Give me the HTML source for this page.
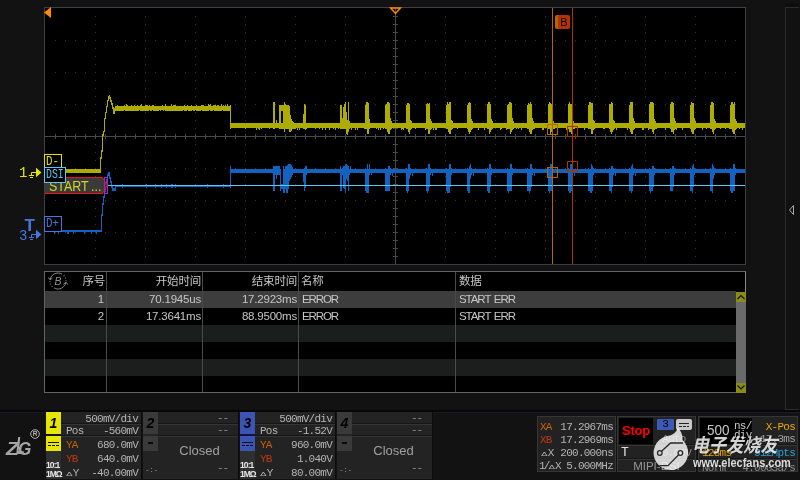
<!DOCTYPE html>
<html lang="zh">
<head>
<meta charset="utf-8">
<title>Oscilloscope MIPI-DSI decode</title>
<style>
*{box-sizing:border-box;margin:0;padding:0}
html,body{width:800px;height:480px;overflow:hidden;background:#121212}
body{position:relative;font-family:"Liberation Sans","Noto Sans CJK SC",sans-serif;color:#c8c8c8}
.abs{position:absolute}
#scopebox{position:absolute;left:44px;top:7px;width:702px;height:258px;border:1px solid #3e3e44;background:#000}
svg.scope{position:absolute;left:0;top:0}
.mono{font-family:"Liberation Mono",monospace}
.lbl{position:absolute;font-family:"Liberation Mono",monospace;font-size:12px;line-height:13px;background:#000;padding-left:1px;white-space:nowrap}
.lbl span{display:inline-block;transform:scaleX(0.9);transform-origin:0 50%}
/* right panel */
#rpanel{position:absolute;left:785px;top:7px;width:14px;height:403px;border:1px solid #2c2c2c;border-right:none;background:#111}
/* table */
#tbl{position:absolute;left:44px;top:271px;width:702px;height:122px;border:1px solid #646464;border-right-color:#868686;background:#000;font-size:11.5px;letter-spacing:-0.2px}
#tbl .row{position:absolute;left:0;width:691px;height:17px}
#tbl .cell{position:absolute;top:0;height:17px;line-height:17px;white-space:nowrap;color:#c6c6c6}
#tbl .vl{position:absolute;top:0;width:1px;height:120px;background:#4a4a4a}
.r{text-align:right}
/* bottom bar */
#bar{position:absolute;left:0;top:410px;width:800px;height:70px}
.chp{position:absolute;top:412px;width:95px;height:67px;background:#232323;box-shadow:1px 0 0 #0c0c0c}
.chp .num{position:absolute;left:0;top:0;width:15px;height:22px;font:italic bold 14px/22px "Liberation Sans",sans-serif;color:#000;text-align:center}
.chp .cpl{position:absolute;left:0;top:24px;width:15px;height:15px}
.chp .t{position:absolute;font-family:"Liberation Mono",monospace;font-size:11px;line-height:12px;white-space:nowrap;color:#b4b4b4;letter-spacing:-0.75px}
.chp .sm{font:bold 8.5px/9px "Liberation Sans",sans-serif;color:#e6e6e6}
.chp .rt{right:3px;text-align:right}
.hl{position:absolute;height:2px;border-top:1px solid #161616;border-bottom:1px solid #353535}
.dl{display:inline-block;font-family:"Liberation Sans",sans-serif;font-size:10px;transform:scaleY(0.52);transform-origin:50% 74%;letter-spacing:0}
.tb{font-size:11px;line-height:12px;letter-spacing:-0.75px;white-space:nowrap}
</style>
</head>
<body>
<div id="root" style="position:absolute;left:0;top:0;width:800px;height:480px;will-change:transform">
<div id="scopebox"></div>
<div id="rpanel"></div><div class="abs" style="left:785px;top:3px;width:14px;height:4px;background:#0e0e0e"></div>
<svg class="scope" width="800" height="480" viewBox="0 0 800 480" shape-rendering="crispEdges">
<g stroke="#363636" stroke-width="1" fill="none"><path d="M55 40.5H745" stroke-dasharray="1 9"/><path d="M55 72.5H745" stroke-dasharray="1 9"/><path d="M55 104.5H745" stroke-dasharray="1 9"/><path d="M55 168.5H745" stroke-dasharray="1 9"/><path d="M55 200.5H745" stroke-dasharray="1 9"/><path d="M55 232.5H745" stroke-dasharray="1 9"/><path d="M95.5 16V264" stroke-dasharray="1 7"/><path d="M145.5 16V264" stroke-dasharray="1 7"/><path d="M195.5 16V264" stroke-dasharray="1 7"/><path d="M245.5 16V264" stroke-dasharray="1 7"/><path d="M295.5 16V264" stroke-dasharray="1 7"/><path d="M345.5 16V264" stroke-dasharray="1 7"/><path d="M445.5 16V264" stroke-dasharray="1 7"/><path d="M495.5 16V264" stroke-dasharray="1 7"/><path d="M545.5 16V264" stroke-dasharray="1 7"/><path d="M595.5 16V264" stroke-dasharray="1 7"/><path d="M645.5 16V264" stroke-dasharray="1 7"/><path d="M695.5 16V264" stroke-dasharray="1 7"/></g>
<g stroke="#4a4a4a" stroke-width="1" fill="none"><path d="M45 136.5H745M395.5 8V264"/><path d="M55.5 134v5M65.5 134v5M75.5 134v5M85.5 134v5M95.5 134v5M105.5 134v5M115.5 134v5M125.5 134v5M135.5 134v5M145.5 134v5M155.5 134v5M165.5 134v5M175.5 134v5M185.5 134v5M195.5 134v5M205.5 134v5M215.5 134v5M225.5 134v5M235.5 134v5M245.5 134v5M255.5 134v5M265.5 134v5M275.5 134v5M285.5 134v5M295.5 134v5M305.5 134v5M315.5 134v5M325.5 134v5M335.5 134v5M345.5 134v5M355.5 134v5M365.5 134v5M375.5 134v5M385.5 134v5M395.5 134v5M405.5 134v5M415.5 134v5M425.5 134v5M435.5 134v5M445.5 134v5M455.5 134v5M465.5 134v5M475.5 134v5M485.5 134v5M495.5 134v5M505.5 134v5M515.5 134v5M525.5 134v5M535.5 134v5M545.5 134v5M555.5 134v5M565.5 134v5M575.5 134v5M585.5 134v5M595.5 134v5M605.5 134v5M615.5 134v5M625.5 134v5M635.5 134v5M645.5 134v5M655.5 134v5M665.5 134v5M675.5 134v5M685.5 134v5M695.5 134v5M705.5 134v5M715.5 134v5M725.5 134v5M735.5 134v5M393 16.5h5M393 24.5h5M393 32.5h5M393 40.5h5M393 48.5h5M393 56.5h5M393 64.5h5M393 72.5h5M393 80.5h5M393 88.5h5M393 96.5h5M393 104.5h5M393 112.5h5M393 120.5h5M393 128.5h5M393 136.5h5M393 144.5h5M393 152.5h5M393 160.5h5M393 168.5h5M393 176.5h5M393 184.5h5M393 192.5h5M393 200.5h5M393 208.5h5M393 216.5h5M393 224.5h5M393 232.5h5M393 240.5h5M393 248.5h5M393 256.5h5"/></g>
<path d="M45.5 169v4M46.5 169v4M47.5 169v4M48.5 169v4M49.5 169v4M50.5 169v4M51.5 169v4M52.5 169v4M53.5 169v4M54.5 169v4M55.5 169v4M56.5 169v4M57.5 169v4M58.5 169v4M59.5 169v4M60.5 169v4M61.5 169v4M62.5 169v4M63.5 169v4M64.5 169v4M65.5 169v4M66.5 169v4M67.5 169v4M68.5 169v4M69.5 169v4M70.5 169v4M71.5 169v4M72.5 169v4M73.5 169v4M74.5 169v4M75.5 169v4M76.5 169v4M77.5 169v4M78.5 169v4M79.5 169v4M80.5 169v4M81.5 169v4M82.5 169v4M83.5 169v4M84.5 169v4M85.5 169v4M86.5 169v4M87.5 169v4M88.5 169v4M89.5 169v4M90.5 169v4M91.5 169v4M92.5 169v4M93.5 169v4M94.5 169v4M95.5 169v4M96.5 169v4M97.5 169v4M98.5 169v4M99.5 169v4M100.5 157v16M101.5 150v9M102.5 134v18M103.5 131v5M104.5 118v14M105.5 112v7M106.5 106v7M107.5 100v7M108.5 96v5M109.5 95v4M110.5 97v5M111.5 100v5M112.5 103v6M113.5 107v7M114.5 108v6M115.5 106v5M116.5 106v5M117.5 105v6M118.5 106v5M119.5 106v5M120.5 106v5M121.5 106v5M122.5 106v5M123.5 106v5M124.5 105v5M125.5 106v5M126.5 104v7M127.5 105v6M128.5 106v5M129.5 106v5M130.5 106v5M131.5 105v6M132.5 106v5M133.5 106v5M134.5 105v6M135.5 106v5M136.5 106v5M137.5 105v6M138.5 106v5M139.5 106v4M140.5 105v6M141.5 104v7M142.5 106v5M143.5 106v5M144.5 106v5M145.5 105v6M146.5 105v6M147.5 105v6M148.5 106v5M149.5 105v5M150.5 106v5M151.5 106v5M152.5 105v5M153.5 105v6M154.5 106v5M155.5 106v5M156.5 106v5M157.5 106v5M158.5 106v5M159.5 106v4M160.5 106v5M161.5 106v4M162.5 105v5M163.5 106v5M164.5 106v4M165.5 104v7M166.5 106v5M167.5 106v5M168.5 106v5M169.5 106v5M170.5 106v5M171.5 104v7M172.5 106v5M173.5 105v6M174.5 105v6M175.5 105v6M176.5 106v5M177.5 106v5M178.5 106v5M179.5 106v5M180.5 106v5M181.5 106v5M182.5 106v5M183.5 106v4M184.5 105v6M185.5 106v5M186.5 106v5M187.5 105v5M188.5 106v5M189.5 106v5M190.5 106v5M191.5 105v6M192.5 106v4M193.5 106v5M194.5 106v5M195.5 106v4M196.5 105v6M197.5 106v5M198.5 106v5M199.5 106v5M200.5 106v5M201.5 105v5M202.5 105v6M203.5 105v6M204.5 106v5M205.5 106v5M206.5 106v5M207.5 106v5M208.5 104v7M209.5 105v5M210.5 104v7M211.5 106v5M212.5 106v5M213.5 105v5M214.5 105v6M215.5 105v6M216.5 106v5M217.5 105v6M218.5 105v6M219.5 106v5M220.5 106v5M221.5 104v7M222.5 106v4M223.5 105v6M224.5 106v5M225.5 105v6M226.5 106v5M227.5 104v7M228.5 106v5M229.5 106v5M230.5 105v24M231.5 123v5M232.5 123v5M233.5 123v5M234.5 123v5M235.5 123v5M236.5 123v5M237.5 123v5M238.5 123v5M239.5 123v5M240.5 123v5M241.5 123v5M242.5 123v5M243.5 123v5M244.5 123v5M245.5 123v6M246.5 123v5M247.5 123v5M248.5 123v5M249.5 123v5M250.5 123v5M251.5 123v5M252.5 123v5M253.5 123v5M254.5 123v5M255.5 123v5M256.5 123v7M257.5 123v5M258.5 123v6M259.5 123v7M260.5 123v5M261.5 123v6M262.5 123v5M263.5 123v5M264.5 123v5M265.5 123v5M266.5 123v5M267.5 123v5M268.5 123v5M269.5 123v6M270.5 123v5M271.5 123v5M272.5 123v5M273.5 102v27M274.5 102v27M275.5 123v5M276.5 120v8M277.5 123v5M278.5 123v5M279.5 105v24M280.5 105v24M281.5 105v6M281.5 123v6M282.5 105v6M282.5 123v6M283.5 105v24M284.5 102v30M285.5 104v25M286.5 105v24M287.5 105v24M288.5 105v24M289.5 106v26M290.5 115v17M291.5 119v12M292.5 121v8M293.5 122v7M294.5 123v6M295.5 123v6M296.5 123v5M297.5 123v7M298.5 123v5M299.5 123v7M300.5 123v5M301.5 123v5M302.5 123v5M303.5 114v15M304.5 104v25M305.5 105v25M306.5 123v6M307.5 123v5M308.5 123v5M309.5 123v5M310.5 123v5M311.5 123v5M312.5 123v5M313.5 123v5M314.5 123v5M315.5 123v6M316.5 123v5M317.5 123v5M318.5 123v5M319.5 123v6M320.5 123v5M321.5 123v5M322.5 123v7M323.5 123v5M324.5 123v5M325.5 123v7M326.5 123v5M327.5 123v5M328.5 123v5M329.5 123v7M330.5 123v5M331.5 123v5M332.5 123v5M333.5 123v6M334.5 123v5M335.5 123v7M336.5 123v5M337.5 123v5M338.5 123v6M339.5 123v5M340.5 105v24M341.5 105v24M342.5 118v11M343.5 107v22M344.5 104v25M345.5 102v27M346.5 112v22M347.5 120v15M348.5 102v30M349.5 121v8M350.5 123v5M351.5 123v7M352.5 123v5M353.5 123v5M354.5 123v5M355.5 123v7M356.5 123v5M357.5 123v7M358.5 123v5M359.5 123v5M360.5 123v5M361.5 123v5M362.5 123v5M363.5 123v5M364.5 123v6M365.5 105v24M366.5 102v27M367.5 102v32M368.5 103v31M369.5 119v10M370.5 123v5M371.5 123v5M372.5 123v5M373.5 123v5M374.5 123v5M375.5 123v5M376.5 123v6M377.5 123v5M378.5 123v7M379.5 123v5M380.5 123v7M381.5 123v5M382.5 123v5M383.5 123v6M384.5 123v5M385.5 105v24M386.5 104v25M387.5 102v30M388.5 102v32M389.5 103v31M390.5 118v12M391.5 121v8M392.5 123v5M393.5 123v5M394.5 123v5M395.5 123v5M396.5 123v5M397.5 123v5M398.5 123v5M399.5 123v5M400.5 123v5M401.5 123v7M402.5 123v6M403.5 123v7M404.5 123v5M405.5 123v5M406.5 105v24M407.5 103v26M408.5 103v29M409.5 104v30M410.5 120v10M411.5 121v8M412.5 123v5M413.5 123v5M414.5 123v5M415.5 123v6M416.5 123v5M417.5 123v5M418.5 123v5M419.5 123v5M420.5 123v5M421.5 123v5M422.5 123v5M423.5 123v5M424.5 123v5M425.5 123v7M426.5 104v25M427.5 103v26M428.5 104v30M429.5 103v31M430.5 119v11M431.5 121v8M432.5 123v5M433.5 123v7M434.5 123v5M435.5 123v7M436.5 123v7M437.5 123v5M438.5 123v5M439.5 123v5M440.5 123v5M441.5 123v5M442.5 123v5M443.5 123v5M444.5 123v5M445.5 123v5M446.5 105v24M447.5 102v27M448.5 104v28M449.5 102v32M450.5 102v32M451.5 120v10M452.5 121v8M453.5 123v5M454.5 123v5M455.5 123v5M456.5 123v5M457.5 123v6M458.5 123v5M459.5 123v5M460.5 123v5M461.5 123v5M462.5 123v5M463.5 123v5M464.5 123v5M465.5 123v5M466.5 123v5M467.5 105v24M468.5 103v29M469.5 102v32M470.5 103v29M471.5 119v11M472.5 121v8M473.5 123v5M474.5 123v5M475.5 123v5M476.5 123v5M477.5 123v5M478.5 123v7M479.5 123v5M480.5 123v5M481.5 123v5M482.5 123v5M483.5 123v5M484.5 123v7M485.5 123v5M486.5 123v5M487.5 104v25M488.5 102v27M489.5 102v32M490.5 104v28M491.5 119v11M492.5 121v8M493.5 123v5M494.5 123v5M495.5 123v5M496.5 123v5M497.5 123v5M498.5 123v5M499.5 123v5M500.5 123v7M501.5 123v6M502.5 123v5M503.5 123v5M504.5 123v5M505.5 123v5M506.5 123v7M507.5 105v24M508.5 104v25M509.5 102v27M510.5 102v32M511.5 103v29M512.5 118v12M513.5 121v8M514.5 123v5M515.5 123v5M516.5 123v6M517.5 123v5M518.5 123v6M519.5 123v5M520.5 123v5M521.5 123v7M522.5 123v5M523.5 123v5M524.5 123v5M525.5 123v5M526.5 123v5M527.5 105v24M528.5 103v26M529.5 104v28M530.5 102v32M531.5 104v30M532.5 118v12M533.5 121v8M534.5 123v6M535.5 123v5M536.5 123v5M537.5 123v5M538.5 123v5M539.5 123v5M540.5 123v5M541.5 123v5M542.5 123v7M543.5 123v7M544.5 123v5M545.5 123v5M546.5 123v5M547.5 123v6M548.5 104v25M549.5 102v27M550.5 103v31M551.5 104v28M552.5 118v12M553.5 121v8M554.5 123v6M555.5 123v5M556.5 123v5M557.5 123v5M558.5 123v5M559.5 123v5M560.5 123v5M561.5 123v5M562.5 123v5M563.5 123v5M564.5 123v5M565.5 123v5M566.5 123v7M567.5 123v6M568.5 104v25M569.5 102v30M570.5 104v28M571.5 104v30M572.5 118v12M573.5 121v8M574.5 123v6M575.5 123v5M576.5 123v5M577.5 123v5M578.5 123v5M579.5 123v5M580.5 123v5M581.5 123v5M582.5 123v5M583.5 123v5M584.5 123v7M585.5 123v5M586.5 123v5M587.5 123v5M588.5 105v24M589.5 102v27M590.5 102v27M591.5 103v31M592.5 103v31M593.5 120v10M594.5 121v8M595.5 123v5M596.5 123v5M597.5 123v5M598.5 123v5M599.5 123v5M600.5 123v5M601.5 123v5M602.5 123v5M603.5 123v6M604.5 123v6M605.5 123v5M606.5 123v5M607.5 123v5M608.5 123v5M609.5 104v25M610.5 104v28M611.5 102v32M612.5 103v29M613.5 120v10M614.5 121v8M615.5 123v5M616.5 123v7M617.5 123v5M618.5 123v5M619.5 123v5M620.5 123v5M621.5 123v5M622.5 123v5M623.5 123v5M624.5 123v5M625.5 123v5M626.5 123v5M627.5 123v7M628.5 123v5M629.5 105v24M630.5 102v30M631.5 102v32M632.5 102v32M633.5 118v12M634.5 121v8M635.5 123v5M636.5 123v5M637.5 123v5M638.5 123v5M639.5 123v5M640.5 123v5M641.5 123v5M642.5 123v7M643.5 123v7M644.5 123v5M645.5 123v5M646.5 123v5M647.5 123v5M648.5 123v7M649.5 104v25M650.5 102v27M651.5 102v27M652.5 102v30M653.5 103v31M654.5 119v11M655.5 121v8M656.5 123v6M657.5 123v5M658.5 123v5M659.5 123v5M660.5 123v5M661.5 123v5M662.5 123v5M663.5 123v5M664.5 123v5M665.5 123v7M666.5 123v5M667.5 123v5M668.5 123v5M669.5 123v5M670.5 104v25M671.5 102v30M672.5 102v30M673.5 103v31M674.5 118v12M675.5 121v8M676.5 123v7M677.5 123v5M678.5 123v5M679.5 123v5M680.5 123v5M681.5 123v5M682.5 123v7M683.5 123v5M684.5 123v5M685.5 123v5M686.5 123v5M687.5 123v5M688.5 123v5M689.5 123v5M690.5 105v24M691.5 102v30M692.5 103v31M693.5 103v31M694.5 118v12M695.5 121v8M696.5 123v5M697.5 123v5M698.5 123v5M699.5 123v5M700.5 123v5M701.5 123v5M702.5 123v7M703.5 123v5M704.5 123v5M705.5 123v5M706.5 123v6M707.5 123v5M708.5 123v5M709.5 123v5M710.5 105v24M711.5 102v27M712.5 102v30M713.5 103v31M714.5 119v11M715.5 121v8M716.5 123v5M717.5 123v5M718.5 123v5M719.5 123v5M720.5 123v6M721.5 123v5M722.5 123v5M723.5 123v5M724.5 123v5M725.5 123v6M726.5 123v5M727.5 123v5M728.5 123v5M729.5 123v6M730.5 105v24M731.5 102v27M732.5 102v30M733.5 104v30M734.5 102v32M735.5 119v11M736.5 121v8M737.5 123v5M738.5 123v5M739.5 123v6M740.5 123v5M741.5 123v5M742.5 123v7M743.5 123v5M744.5 123v5" stroke="#aeac00" stroke-width="1" fill="none"/>
<path d="M45.5 230v2M46.5 230v2M47.5 230v2M48.5 230v2M49.5 230v2M50.5 230v2M51.5 230v2M52.5 230v2M53.5 230v2M54.5 230v4M55.5 230v2M56.5 230v2M57.5 230v2M58.5 230v4M59.5 230v2M60.5 230v2M61.5 230v2M62.5 230v2M63.5 230v2M64.5 230v2M65.5 230v2M66.5 230v2M67.5 230v4M68.5 230v4M69.5 230v2M70.5 230v2M71.5 230v2M72.5 230v2M73.5 230v4M74.5 230v2M75.5 230v2M76.5 230v2M77.5 230v2M78.5 230v2M79.5 230v2M80.5 230v2M81.5 230v2M82.5 230v2M83.5 230v2M84.5 230v4M85.5 230v2M86.5 230v2M87.5 230v2M88.5 230v2M89.5 230v2M90.5 230v2M91.5 230v4M92.5 230v2M93.5 230v2M94.5 230v2M95.5 230v2M96.5 230v4M97.5 230v2M98.5 230v2M99.5 230v2M100.5 230v2M101.5 214v18M102.5 203v13M103.5 196v9M104.5 190v8M105.5 184v8M106.5 179v7M107.5 174v7M108.5 172v4M109.5 172v7M110.5 177v6M111.5 181v7M112.5 186v5M113.5 188v3M114.5 188v3M115.5 186v5M116.5 186v1M117.5 186v1M118.5 186v1M119.5 186v1M120.5 186v1M121.5 186v1M122.5 184v4M123.5 186v1M124.5 186v1M125.5 186v1M126.5 186v1M127.5 186v1M128.5 186v1M129.5 186v1M130.5 186v1M131.5 186v1M132.5 186v1M133.5 186v1M134.5 186v1M135.5 186v1M136.5 186v1M137.5 186v1M138.5 186v1M139.5 186v1M140.5 186v1M141.5 186v1M142.5 186v1M143.5 186v1M144.5 186v1M145.5 186v1M146.5 184v4M147.5 186v1M148.5 186v1M149.5 186v1M150.5 186v1M151.5 186v1M152.5 186v1M153.5 186v1M154.5 186v1M155.5 184v4M156.5 186v1M157.5 186v1M158.5 186v1M159.5 186v1M160.5 186v1M161.5 184v4M162.5 186v1M163.5 186v1M164.5 186v1M165.5 186v1M166.5 184v4M167.5 186v1M168.5 186v1M169.5 186v1M170.5 186v1M171.5 184v4M172.5 184v4M173.5 186v1M174.5 186v1M175.5 184v4M176.5 186v1M177.5 186v1M178.5 186v1M179.5 186v1M180.5 186v1M181.5 186v1M182.5 186v1M183.5 186v1M184.5 186v1M185.5 186v1M186.5 186v1M187.5 186v1M188.5 186v1M189.5 186v1M190.5 186v1M191.5 186v1M192.5 186v1M193.5 186v1M194.5 186v1M195.5 186v1M196.5 186v1M197.5 186v1M198.5 186v1M199.5 186v1M200.5 186v1M201.5 186v1M202.5 186v1M203.5 186v1M204.5 186v1M205.5 186v1M206.5 186v1M207.5 184v4M208.5 186v1M209.5 186v1M210.5 186v1M211.5 186v1M212.5 186v1M213.5 186v1M214.5 186v1M215.5 186v1M216.5 186v1M217.5 186v1M218.5 186v1M219.5 186v1M220.5 186v1M221.5 186v1M222.5 186v1M223.5 184v4M224.5 186v1M225.5 186v1M226.5 186v1M227.5 186v1M228.5 186v1M229.5 186v1M230.5 166v22M231.5 169v4M232.5 169v4M233.5 169v4M234.5 169v4M235.5 169v4M236.5 169v4M237.5 169v4M238.5 169v4M239.5 169v4M240.5 169v4M241.5 169v4M242.5 169v4M243.5 169v4M244.5 169v4M245.5 169v4M246.5 169v4M247.5 169v4M248.5 169v4M249.5 169v4M250.5 169v4M251.5 169v4M252.5 169v4M253.5 169v4M254.5 169v4M255.5 169v4M256.5 169v4M257.5 169v4M258.5 169v4M259.5 169v4M260.5 169v4M261.5 169v4M262.5 169v4M263.5 169v4M264.5 169v4M265.5 169v4M266.5 169v4M267.5 169v4M268.5 169v4M269.5 169v4M270.5 169v4M271.5 169v4M272.5 169v4M273.5 166v25M274.5 166v25M275.5 166v9M276.5 166v13M277.5 166v9M278.5 166v9M279.5 166v9M280.5 169v22M281.5 184v5M282.5 184v5M283.5 166v27M284.5 169v24M285.5 166v23M286.5 166v27M287.5 165v28M288.5 164v25M289.5 164v17M290.5 164v15M291.5 165v12M292.5 167v8M293.5 169v4M294.5 169v4M295.5 169v4M296.5 169v4M297.5 169v4M298.5 169v4M299.5 169v4M300.5 169v4M301.5 169v4M302.5 169v4M303.5 169v13M304.5 168v23M305.5 166v22M306.5 166v9M307.5 169v4M308.5 169v4M309.5 169v4M310.5 169v4M311.5 169v4M312.5 169v4M313.5 169v4M314.5 169v4M315.5 169v4M316.5 169v4M317.5 169v4M318.5 169v4M319.5 169v4M320.5 169v4M321.5 169v4M322.5 169v4M323.5 169v4M324.5 169v4M325.5 169v4M326.5 169v4M327.5 169v4M328.5 169v4M329.5 169v4M330.5 169v4M331.5 169v4M332.5 169v4M333.5 169v4M334.5 169v4M335.5 169v4M336.5 169v4M337.5 169v4M338.5 169v4M339.5 169v4M340.5 166v25M341.5 169v22M342.5 168v7M343.5 166v22M344.5 166v23M345.5 164v29M346.5 164v15M347.5 165v16M348.5 166v25M349.5 169v6M350.5 166v7M351.5 169v4M352.5 169v4M353.5 169v4M354.5 169v4M355.5 169v4M356.5 169v4M357.5 169v4M358.5 169v4M359.5 169v4M360.5 169v4M361.5 169v4M362.5 169v4M363.5 169v4M364.5 169v4M365.5 169v22M366.5 169v24M367.5 164v29M368.5 169v24M369.5 164v11M370.5 169v4M371.5 169v6M372.5 169v4M373.5 169v4M374.5 169v4M375.5 169v4M376.5 169v4M377.5 169v4M378.5 169v4M379.5 169v4M380.5 169v4M381.5 169v4M382.5 169v4M383.5 169v4M384.5 169v4M385.5 168v23M386.5 169v22M387.5 169v22M388.5 166v25M389.5 166v25M390.5 168v7M391.5 169v4M392.5 169v7M393.5 169v4M394.5 169v4M395.5 169v4M396.5 169v4M397.5 169v4M398.5 169v4M399.5 169v4M400.5 169v4M401.5 169v4M402.5 169v4M403.5 169v4M404.5 169v4M405.5 169v4M406.5 168v23M407.5 169v24M408.5 164v27M409.5 164v15M410.5 168v7M411.5 169v4M412.5 169v7M413.5 169v4M414.5 169v4M415.5 169v4M416.5 169v4M417.5 169v4M418.5 169v4M419.5 169v4M420.5 169v4M421.5 169v4M422.5 169v4M423.5 169v4M424.5 169v4M425.5 169v4M426.5 168v23M427.5 169v24M428.5 164v27M429.5 164v23M430.5 168v7M431.5 169v4M432.5 169v7M433.5 169v4M434.5 169v4M435.5 169v4M436.5 169v4M437.5 169v4M438.5 169v4M439.5 169v4M440.5 169v4M441.5 169v4M442.5 169v4M443.5 169v4M444.5 169v4M445.5 169v4M446.5 168v23M447.5 169v24M448.5 169v24M449.5 164v29M450.5 164v23M451.5 168v7M452.5 169v4M453.5 169v4M454.5 169v4M455.5 169v4M456.5 169v4M457.5 169v4M458.5 169v4M459.5 169v4M460.5 169v4M461.5 169v4M462.5 169v4M463.5 169v4M464.5 169v4M465.5 169v4M466.5 169v4M467.5 168v23M468.5 169v24M469.5 166v27M470.5 164v15M471.5 168v7M472.5 169v4M473.5 169v7M474.5 169v4M475.5 169v4M476.5 169v4M477.5 169v4M478.5 169v4M479.5 169v4M480.5 169v4M481.5 169v4M482.5 169v4M483.5 169v4M484.5 169v4M485.5 169v4M486.5 169v4M487.5 168v23M488.5 169v24M489.5 164v29M490.5 164v23M491.5 168v7M492.5 169v4M493.5 169v4M494.5 169v4M495.5 169v4M496.5 169v4M497.5 169v4M498.5 169v4M499.5 169v4M500.5 169v4M501.5 169v4M502.5 169v4M503.5 169v4M504.5 169v4M505.5 169v4M506.5 169v4M507.5 168v23M508.5 169v24M509.5 169v22M510.5 164v27M511.5 164v27M512.5 168v7M513.5 169v4M514.5 169v4M515.5 169v4M516.5 169v4M517.5 169v4M518.5 169v4M519.5 169v4M520.5 169v4M521.5 169v4M522.5 169v4M523.5 169v4M524.5 169v4M525.5 169v4M526.5 169v4M527.5 168v23M528.5 169v22M529.5 169v24M530.5 164v27M531.5 164v23M532.5 168v7M533.5 169v4M534.5 169v7M535.5 169v4M536.5 169v4M537.5 169v4M538.5 169v4M539.5 169v4M540.5 169v4M541.5 169v4M542.5 169v4M543.5 169v4M544.5 169v4M545.5 169v4M546.5 169v4M547.5 169v4M548.5 168v23M549.5 169v24M550.5 164v27M551.5 164v27M552.5 168v7M553.5 169v4M554.5 169v4M555.5 169v4M556.5 169v4M557.5 169v4M558.5 169v4M559.5 169v4M560.5 169v4M561.5 169v4M562.5 169v4M563.5 169v4M564.5 169v4M565.5 169v4M566.5 169v4M567.5 169v4M568.5 168v23M569.5 169v24M570.5 164v29M571.5 164v27M572.5 168v7M573.5 169v4M574.5 169v7M575.5 169v4M576.5 169v4M577.5 169v4M578.5 169v4M579.5 169v4M580.5 169v4M581.5 169v4M582.5 169v4M583.5 169v4M584.5 169v4M585.5 169v4M586.5 169v4M587.5 169v4M588.5 168v23M589.5 169v22M590.5 169v24M591.5 164v29M592.5 166v25M593.5 168v7M594.5 169v4M595.5 169v4M596.5 169v4M597.5 169v4M598.5 169v4M599.5 169v4M600.5 169v4M601.5 169v4M602.5 169v4M603.5 169v4M604.5 169v4M605.5 169v4M606.5 169v4M607.5 169v4M608.5 169v4M609.5 168v23M610.5 169v22M611.5 166v27M612.5 166v21M613.5 168v7M614.5 169v4M615.5 169v7M616.5 169v4M617.5 169v4M618.5 169v4M619.5 169v4M620.5 169v4M621.5 169v4M622.5 169v4M623.5 169v4M624.5 169v4M625.5 169v4M626.5 169v4M627.5 169v4M628.5 169v4M629.5 168v23M630.5 169v22M631.5 166v27M632.5 164v27M633.5 168v7M634.5 169v4M635.5 169v7M636.5 169v4M637.5 169v4M638.5 169v4M639.5 169v4M640.5 169v4M641.5 169v4M642.5 169v4M643.5 169v4M644.5 169v4M645.5 169v4M646.5 169v4M647.5 169v4M648.5 169v4M649.5 168v23M650.5 169v24M651.5 169v22M652.5 166v25M653.5 166v21M654.5 168v7M655.5 169v4M656.5 169v4M657.5 169v4M658.5 169v4M659.5 169v4M660.5 169v4M661.5 169v4M662.5 169v4M663.5 169v4M664.5 169v4M665.5 169v4M666.5 169v4M667.5 169v4M668.5 169v4M669.5 169v4M670.5 168v23M671.5 169v22M672.5 166v25M673.5 166v21M674.5 168v7M675.5 169v4M676.5 169v4M677.5 169v4M678.5 169v4M679.5 169v4M680.5 169v4M681.5 169v4M682.5 169v4M683.5 169v4M684.5 169v4M685.5 169v4M686.5 169v4M687.5 169v4M688.5 169v4M689.5 169v4M690.5 168v23M691.5 169v22M692.5 166v27M693.5 164v23M694.5 168v7M695.5 169v4M696.5 169v4M697.5 169v4M698.5 169v4M699.5 169v4M700.5 169v4M701.5 169v4M702.5 169v4M703.5 169v4M704.5 169v4M705.5 169v4M706.5 169v4M707.5 169v4M708.5 169v4M709.5 169v4M710.5 168v23M711.5 169v22M712.5 164v29M713.5 166v13M714.5 168v7M715.5 169v4M716.5 169v4M717.5 169v4M718.5 169v4M719.5 169v4M720.5 169v4M721.5 169v4M722.5 169v4M723.5 169v4M724.5 169v4M725.5 169v4M726.5 169v4M727.5 169v4M728.5 169v4M729.5 169v4M730.5 168v23M731.5 169v24M732.5 169v24M733.5 164v27M734.5 164v27M735.5 168v7M736.5 169v4M737.5 169v4M738.5 169v4M739.5 169v4M740.5 169v4M741.5 169v4M742.5 169v4M743.5 169v4M744.5 169v4" stroke="#1262c0" stroke-width="1" fill="none"/>
<path d="M107 185.5H745" stroke="#5ac8f5" stroke-width="1" fill="none"/>
<!-- decode bar -->
<path d="M45 177.5H102.5L107.5 185.5L102.5 193.5H45Z" fill="#3a3a3a" stroke="none"/>
<rect x="104.5" y="177.5" width="3" height="16" fill="none" stroke="#a020e0" stroke-width="1"/>
<path d="M45 177.5H102.5L107.5 185.5L102.5 193.5H45" fill="none" stroke="#f01010" stroke-width="1" shape-rendering="auto"/>
<!-- cursors -->
<path d="M552.5 8V264" stroke="#b86400" stroke-width="1"/>
<path d="M572.5 8V264" stroke="#ae3200" stroke-width="1"/>
<g fill="none" stroke-width="1">
<rect x="547.5" y="124.5" width="10" height="10" stroke="#b86400"/>
<rect x="547.5" y="167.5" width="10" height="10" stroke="#b86400"/>
<rect x="567.5" y="126.5" width="10" height="10" stroke="#ae3200"/>
<rect x="567.5" y="161.5" width="10" height="10" stroke="#ae3200"/>
</g>
<!-- markers -->
<path d="M44 12.5L51 7V18Z" fill="#ff8c00" shape-rendering="auto"/>
<path d="M390.5 8H400.5L395.5 13.5Z" fill="none" stroke="#ff8c00" stroke-width="1.4" shape-rendering="auto"/>
<path d="M789.5 210L793.5 205.5V214.5Z" fill="none" stroke="#aaa" stroke-width="1" shape-rendering="auto"/>
</svg>
<!-- channel labels -->
<div class="abs" style="left:49px;top:178px;height:17px;font-size:14.5px;line-height:17px;color:#d2d228;white-space:nowrap;transform:scaleX(0.86);transform-origin:0 0;word-spacing:-1px">START ...</div>
<div class="lbl" style="left:44px;top:154px;width:18px;height:15px;border:1px solid #e0e000;color:#e0e000;padding-top:1px"><span>D-</span></div>
<div class="lbl" style="left:44px;top:167px;width:22px;height:16px;border:1px solid #5ac8f5;color:#5ac8f5;padding-top:1px"><span style="transform:scaleX(0.82)">DSI</span></div>
<div class="lbl" style="left:44px;top:216px;width:18px;height:16px;border:1px solid #4678dc;color:#4678dc;padding-top:1px"><span>D+</span></div>
<div class="abs" style="left:555px;top:15px;width:15px;height:14px;border-radius:2px;background:#b43400;border-left:3px solid #b86400;font:11px/14px 'Liberation Sans',sans-serif;color:#000;text-align:center">B</div>
<!-- left markers -->
<div class="abs mono" style="left:19px;top:165px;font-size:14px;line-height:16px;color:#e6e600">1</div>
<div class="abs mono" style="left:19px;top:228px;font-size:14px;line-height:16px;color:#4678dc">3</div>
<div class="abs" style="left:24.5px;top:217px;font:bold 17px/17px 'Liberation Sans',sans-serif;color:#4678dc">T</div>
<svg class="abs" style="left:26px;top:165px" width="18" height="16" viewBox="0 0 18 16"><path d="M2.8 10.5H8M4 12.5H7M5.5 10V7.5H11" stroke="#e6e600" fill="none" stroke-width="1"/><path d="M10 2.8L15.4 7.5L10 12.2Z" fill="#e6e600"/></svg>
<svg class="abs" style="left:26px;top:227px" width="18" height="16" viewBox="0 0 18 16"><path d="M2.8 10.5H8M4 12.5H7M5.5 10V7.5H11" stroke="#4678dc" fill="none" stroke-width="1"/><path d="M10 2.8L15.4 7.5L10 12.2Z" fill="#4678dc"/></svg>

<!-- table -->
<div id="tbl">
  <div class="row" style="top:19px;background:#3d3d3d;height:17px"></div>
  <div class="row" style="top:53px;background:#1a1e1d"></div>
  <div class="row" style="top:87px;background:#1a1e1d"></div>
  <div class="vl" style="left:61px"></div><div class="vl" style="left:157px"></div><div class="vl" style="left:253px"></div><div class="vl" style="left:410px"></div>
  <div class="cell r" style="left:0;width:60px;top:1px">序号</div>
  <div class="cell r" style="left:62px;width:94px;top:1px">开始时间</div>
  <div class="cell r" style="left:158px;width:94px;top:1px">结束时间</div>
  <div class="cell" style="left:256px;top:1px">名称</div>
  <div class="cell" style="left:414px;top:1px">数据</div>
  <div class="cell r" style="left:0;width:59px;top:19px">1</div>
  <div class="cell r" style="left:62px;width:94px;top:19px">70.1945us</div>
  <div class="cell r" style="left:158px;width:94px;top:19px">17.2923ms</div>
  <div class="cell" style="left:257px;top:19px;letter-spacing:-1.1px">ERROR</div>
  <div class="cell" style="left:414px;top:19px;letter-spacing:-1.05px;word-spacing:1.5px">START ERR</div>
  <div class="cell r" style="left:0;width:59px;top:36px">2</div>
  <div class="cell r" style="left:62px;width:94px;top:36px">17.3641ms</div>
  <div class="cell r" style="left:158px;width:94px;top:36px">88.9500ms</div>
  <div class="cell" style="left:257px;top:36px;letter-spacing:-1.1px">ERROR</div>
  <div class="cell" style="left:414px;top:36px;letter-spacing:-1.05px;word-spacing:1.5px">START ERR</div>
  <!-- scrollbar -->
  <div class="abs" style="left:691px;top:20px;width:10px;height:100px;background:#6a6a6a"></div>
  <div class="abs" style="left:691px;top:20px;width:10px;height:10px;background:#8c8c12"></div>
  <div class="abs" style="left:691px;top:111px;width:10px;height:10px;background:#8c8c12"></div>
  <svg class="abs" style="left:691px;top:20px" width="10" height="100" viewBox="0 0 10 100"><path d="M1.5 7L5 3.5L8.5 7M1.5 93.5L5 97L8.5 93.5" stroke="#111" stroke-width="1.2" fill="none"/></svg>
  <svg class="abs" style="left:3px;top:-1px" width="20" height="20" viewBox="0 0 20 20"><g fill="none" stroke="#8a8a8a" stroke-width="1"><path d="M14 3.07A8 8 0 0 0 2.12 8.61M0.2 6.4L2.12 8.9L4.6 6.9"/><path d="M6 16.93A8 8 0 0 0 17.88 11.39M15.4 13.2L17.88 11.1L19.8 13.6"/><circle cx="15.95" cy="4.65" r="0.6" fill="#8a8a8a" stroke="none"/><circle cx="17.42" cy="7.00" r="0.6" fill="#8a8a8a" stroke="none"/><circle cx="18.00" cy="9.72" r="0.6" fill="#8a8a8a" stroke="none"/><circle cx="4.05" cy="15.35" r="0.6" fill="#8a8a8a" stroke="none"/><circle cx="2.58" cy="13.00" r="0.6" fill="#8a8a8a" stroke="none"/><circle cx="2.00" cy="10.28" r="0.6" fill="#8a8a8a" stroke="none"/></g><text x="10" y="13.6" text-anchor="middle" font-family="Liberation Sans,sans-serif" font-size="10.5" font-style="italic" fill="#8c8c8c">B</text></svg>
</div>

<div class="abs" style="left:0;top:410px;width:800px;height:2px;background:#070707"></div><div class="abs" style="left:0;top:412px;width:800px;height:1px;background:#1b1b22"></div>
<div class="abs" style="left:5px;top:437px;width:30px;height:20px;color:#a4a4a4;font-family:'Liberation Sans',sans-serif;font-style:italic;font-weight:bold;white-space:nowrap">
<span class="abs" style="left:0.5px;top:2px;font-size:19px;line-height:19px;transform:scaleX(1.12);transform-origin:0 0">Z</span>
<span class="abs" style="left:11px;top:-3px;font-size:24px;line-height:24px;transform:scaleX(0.6);transform-origin:0 0">L</span>
<span class="abs" style="left:13px;top:2px;font-size:19px;line-height:19px;transform:scaleX(0.9);transform-origin:0 0">G</span>
</div>
<svg class="abs" style="left:28.5px;top:428px" width="12" height="12" viewBox="0 0 12 12"><circle cx="6" cy="6" r="4.3" fill="none" stroke="#b4b4b4" stroke-width="1"/><text x="6" y="8.4" text-anchor="middle" font-family="Liberation Sans,sans-serif" font-size="6.5" font-weight="bold" fill="#b4b4b4">R</text></svg>
<div class="chp" style="left:46px">
<div class="abs" style="left:0;top:0;width:15px;height:67px;background:#2f2f2f"></div>
<div class="num" style="background:#e6e600">1</div>
<div class="abs" style="left:0;top:22px;width:15px;height:2px;background:#14143a"></div>
<div class="cpl" style="background:#e6e600"><svg width="15" height="15" viewBox="0 0 15 15" style="position:absolute;left:0;top:0" shape-rendering="crispEdges"><path d="M2 6.5H13" stroke="#111" stroke-width="1" fill="none"/><path d="M2 9.5H13" stroke="#111" stroke-width="1" stroke-dasharray="3 1" fill="none"/></svg></div>
<div class="t sm" style="left:0;top:49px;letter-spacing:-0.9px">10:1</div>
<div class="t sm" style="left:0;top:58px;letter-spacing:-1px">1MΩ</div>
<div class="hl" style="left:15px;top:11px;width:80px"></div>
<div class="hl" style="left:15px;top:23px;width:80px"></div>
<div class="t rt" style="top:1px">500mV/div</div>
<div class="t" style="left:20px;top:13px">Pos</div><div class="t rt" style="top:13px">-560mV</div>
<div class="t" style="left:20px;top:27px;color:#c86400">YA</div><div class="t rt" style="top:27px">680.0mV</div>
<div class="t" style="left:20px;top:41px;color:#c03a10">YB</div><div class="t rt" style="top:41px">640.0mV</div>
<div class="t" style="left:20px;top:55px"><span class="dl">Δ</span>Y</div><div class="t rt" style="top:55px">-40.00mV</div>
</div>
<div class="chp" style="left:143px">
<div class="num" style="background:#3a3a3a">2</div>
<div class="cpl" style="background:#3a3a3a"><svg width="15" height="15" viewBox="0 0 15 15" style="position:absolute;left:0;top:0" shape-rendering="crispEdges"><path d="M5 7H10" stroke="#0a0a0a" stroke-width="2" fill="none"/></svg></div>
<div class="hl" style="left:15px;top:11px;width:80px"></div>
<div class="hl" style="left:15px;top:23px;width:80px"></div>
<div class="t" style="left:74px;top:0px;color:#8c8c8c;letter-spacing:-1px">--</div>
<div class="t" style="left:74px;top:12px;color:#8c8c8c;letter-spacing:-1px">--</div>
<div class="t" style="left:74px;top:50px;color:#8c8c8c;letter-spacing:-1px">--</div>
<div class="t" style="left:2px;top:52px;color:#8c8c8c;font-size:8px;letter-spacing:-0.6px">-:-</div>
<div class="abs" style="left:15px;top:31px;width:83px;text-align:center;font:13px/16px 'Liberation Sans',sans-serif;color:#a0a0a0">Closed</div>
</div>
<div class="chp" style="left:240px">
<div class="abs" style="left:0;top:0;width:15px;height:67px;background:#2f2f2f"></div>
<div class="num" style="background:#3c55b4">3</div>
<div class="abs" style="left:0;top:22px;width:15px;height:2px;background:#14143a"></div>
<div class="cpl" style="background:#3c55b4"><svg width="15" height="15" viewBox="0 0 15 15" style="position:absolute;left:0;top:0" shape-rendering="crispEdges"><path d="M2 6.5H13" stroke="#111" stroke-width="1" fill="none"/><path d="M2 9.5H13" stroke="#111" stroke-width="1" stroke-dasharray="3 1" fill="none"/></svg></div>
<div class="t sm" style="left:0;top:49px;letter-spacing:-0.9px">10:1</div>
<div class="t sm" style="left:0;top:58px;letter-spacing:-1px">1MΩ</div>
<div class="hl" style="left:15px;top:11px;width:80px"></div>
<div class="hl" style="left:15px;top:23px;width:80px"></div>
<div class="t rt" style="top:1px">500mV/div</div>
<div class="t" style="left:20px;top:13px">Pos</div><div class="t rt" style="top:13px">-1.52V</div>
<div class="t" style="left:20px;top:27px;color:#c86400">YA</div><div class="t rt" style="top:27px">960.0mV</div>
<div class="t" style="left:20px;top:41px;color:#c03a10">YB</div><div class="t rt" style="top:41px">1.040V</div>
<div class="t" style="left:20px;top:55px"><span class="dl">Δ</span>Y</div><div class="t rt" style="top:55px">80.00mV</div>
</div>
<div class="chp" style="left:337px">
<div class="num" style="background:#3a3a3a">4</div>
<div class="cpl" style="background:#3a3a3a"><svg width="15" height="15" viewBox="0 0 15 15" style="position:absolute;left:0;top:0" shape-rendering="crispEdges"><path d="M5 7H10" stroke="#0a0a0a" stroke-width="2" fill="none"/></svg></div>
<div class="hl" style="left:15px;top:11px;width:80px"></div>
<div class="hl" style="left:15px;top:23px;width:80px"></div>
<div class="t" style="left:74px;top:0px;color:#8c8c8c;letter-spacing:-1px">--</div>
<div class="t" style="left:74px;top:12px;color:#8c8c8c;letter-spacing:-1px">--</div>
<div class="t" style="left:74px;top:50px;color:#8c8c8c;letter-spacing:-1px">--</div>
<div class="t" style="left:2px;top:52px;color:#8c8c8c;font-size:8px;letter-spacing:-0.6px">-:-</div>
<div class="abs" style="left:15px;top:31px;width:83px;text-align:center;font:13px/16px 'Liberation Sans',sans-serif;color:#a0a0a0">Closed</div>
</div>
<div class="abs mono" style="left:537px;top:416px;width:79px;height:56px;background:#222;border:1px solid #363636;font-size:11px;line-height:12px;color:#b4b4b4;white-space:nowrap;letter-spacing:-0.75px">
<div class="abs" style="left:2px;top:4px;color:#c86400">XA</div><div class="abs" style="right:2px;top:4px">17.2967ms</div>
<div class="abs" style="left:2px;top:17px;color:#c03a10">XB</div><div class="abs" style="right:2px;top:17px">17.2969ms</div>
<div class="abs" style="left:3px;top:30px"><span class="dl">Δ</span>X</div><div class="abs" style="right:2px;top:30px">200.000ns</div>
<div class="abs" style="left:1px;top:43px;letter-spacing:-1.9px">1/<span class="dl">Δ</span>X</div><div class="abs" style="right:2px;top:43px">5.000MHz</div>
</div>
<div class="abs" style="left:617px;top:416px;width:79px;height:56px;background:#222;border:1px solid #363636">
<div class="abs" style="left:1px;top:1px;width:34px;height:26px;background:#000;color:#f00;font:bold 13px/25px 'Liberation Sans',sans-serif;text-align:left;padding-left:3px;letter-spacing:-0.2px">Stop</div>
<div class="abs mono" style="left:39px;top:2px;width:17px;height:11px;background:#3c5ab4;color:#000;font-size:11px;line-height:11px;text-align:center;border-radius:1px">3</div>
<div class="abs" style="left:58px;top:2px;width:16px;height:11px;background:#c8c8c8;border-radius:2px"><svg width="16" height="11" viewBox="0 0 16 11" shape-rendering="crispEdges" style="position:absolute;left:0;top:0"><path d="M3 4.5H13" stroke="#222" stroke-width="1"/><path d="M3 7.5H13" stroke="#222" stroke-width="1" stroke-dasharray="3 1"/></svg></div>
<div class="abs mono" style="left:35px;top:16px;width:42px;text-align:center;font-size:11px;line-height:12px;color:#8c8c8c;letter-spacing:-0.75px">Auto</div>
<div class="abs" style="left:0;top:27px;width:77px;height:2px;border-top:1px solid #161616;border-bottom:1px solid #363636"></div>
<div class="abs" style="left:0;top:41px;width:77px;height:2px;border-top:1px solid #161616;border-bottom:1px solid #363636"></div>
<div class="abs mono" style="left:3px;top:29px;font-size:13px;line-height:13px;color:#e0e0e0">T</div>
<div class="abs mono" style="left:33px;top:30px;width:40px;text-align:right;font-size:11px;line-height:12px;color:#8c8c8c;letter-spacing:-0.75px">0.00V</div>
<div class="abs" style="left:0;top:43px;width:77px;text-align:center;font:11.5px/12px 'Liberation Sans',sans-serif;color:#969696">MIPI-DSI</div>
</div>
<div class="abs" style="left:698px;top:416px;width:100px;height:56px;background:#222;border:1px solid #363636">
<div class="abs" style="left:1px;top:1px;width:52px;height:26px;background:#000"></div>
<div class="abs" style="left:8px;top:4px;font:15px/18px 'Liberation Sans',sans-serif;color:#c8c8c8;transform:scaleX(0.9);transform-origin:0 0">500</div>
<div class="abs mono tb" style="left:35px;top:5px;line-height:9px;color:#c8c8c8">ns/<br>div</div>
<div class="abs mono tb" style="right:2px;top:4px;color:#e6a800">X-Pos</div>
<div class="abs mono tb" style="right:2px;top:16px;color:#a0a0a0">17.3ms</div>
<div class="abs" style="left:0;top:27px;width:98px;height:2px;border-top:1px solid #161616;border-bottom:1px solid #363636"></div>
<div class="abs" style="left:0;top:41px;width:98px;height:2px;border-top:1px solid #161616;border-bottom:1px solid #363636"></div>
<div class="abs mono tb" style="left:3px;top:30px;color:#e6a800">128ms</div>
<div class="abs mono tb" style="right:2px;top:30px;color:#28a0d2">512Mpts</div>
<div class="abs mono tb" style="left:3px;top:45px;color:#8c8c8c">Norm</div>
<div class="abs mono tb" style="right:2px;top:45px;color:#8c8c8c">4.00GSa/s</div>
</div>
<svg class="abs" style="left:645px;top:422px" width="60" height="56" viewBox="645 422 60 56">
<path style="mix-blend-mode:screen" d="M670 435.5 C674 434 677 431.5 677.8 427.5 C681 431 683 435 682.5 440 A17.3 17.3 0 1 1 670 435.5Z" fill="#cdcdcd"/>
<g stroke="#2a2a2a" stroke-width="1.3" fill="none"><circle cx="659.8" cy="453" r="2.3"/><circle cx="680.4" cy="453" r="2.3"/><path d="M661.6 451.3L670.5 443H683"/><path d="M678.6 454.8L668 465.6H659.5"/></g>
</svg>
<div class="abs" style="left:692px;top:431px;font:700 19px/26px 'Noto Sans CJK SC','Noto Serif CJK SC',sans-serif;color:#f4f4f4;opacity:.86;white-space:nowrap;font-style:italic;transform:scaleX(0.9);transform-origin:0 0;text-shadow:0 0 2px rgba(0,0,0,.7)">电子发烧友</div>
<div class="abs" style="left:693px;top:455px;font:bold 13px/16px 'Liberation Sans',sans-serif;color:#f4f4f4;opacity:.88;white-space:nowrap;transform:scaleX(0.845);transform-origin:0 0;text-shadow:0 0 2px rgba(0,0,0,.7)">www.elecfans.com</div>
</div>
</body>
</html>
